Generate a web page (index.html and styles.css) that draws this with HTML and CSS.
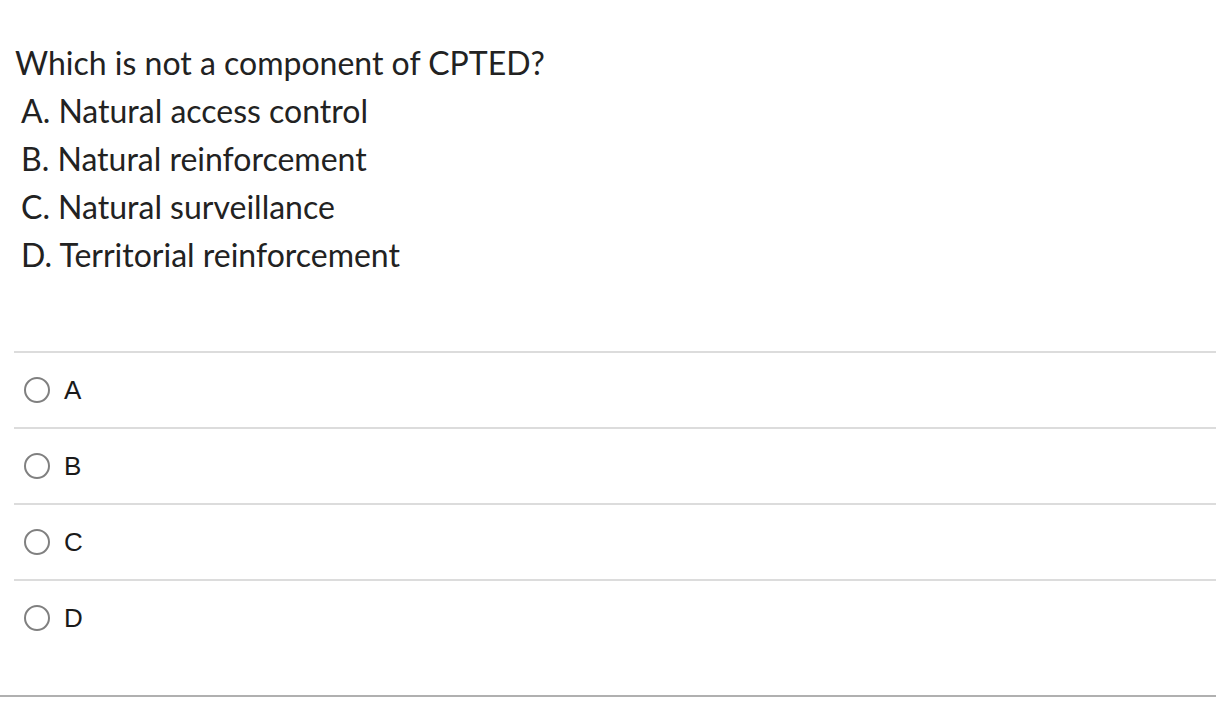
FILE: index.html
```html
<!DOCTYPE html>
<html>
<head>
<meta charset="utf-8">
<link rel="stylesheet" href="styles.css">
</head>
<body>
<div class="page">
  <div class="question">
    <div class="stem">Which is not a component of CPTED?</div>
    <ol class="choices">
      <li>A. Natural access control</li>
      <li>B. Natural reinforcement</li>
      <li>C. Natural surveillance</li>
      <li>D. Territorial reinforcement</li>
    </ol>
  </div>
  <div class="answers">
    <label class="answer"><span class="radio"></span><span class="letter">A</span></label>
    <label class="answer"><span class="radio"></span><span class="letter">B</span></label>
    <label class="answer"><span class="radio"></span><span class="letter">C</span></label>
    <label class="answer"><span class="radio"></span><span class="letter">D</span></label>
  </div>
  <div class="bottom-rule"></div>
</div>
</body>
</html>
```
FILE: styles.css
```css
html, body {
  margin: 0;
  padding: 0;
  background: #ffffff;
}
.page {
  width: 1216px;
  height: 706px;
  overflow: hidden;
}
.question {
  padding: 39px 0 0 15px;
  font-family: Lato, "Liberation Sans", sans-serif;
  font-size: 32px;
  line-height: 48px;
  color: #222222;
}
.stem {
  margin: 0;
}
.choices {
  list-style: none;
  margin: 0;
  padding: 0 0 0 6px;
}
.answers {
  margin: 72px 0 0 14px;
}
.answer {
  display: flex;
  align-items: center;
  gap: 14px;
  height: 74px;
  padding-left: 10px;
  border-top: 2px solid #dcdcdc;
  font-family: "Liberation Sans", Arial, sans-serif;
  font-size: 26px;
  color: #1a1a1a;
}
.radio {
  width: 22px;
  height: 22px;
  border: 2px solid #808080;
  border-radius: 50%;
  flex: none;
}
.bottom-rule {
  margin-top: 40px;
  height: 2px;
  background: #b0b0b0;
}
```
